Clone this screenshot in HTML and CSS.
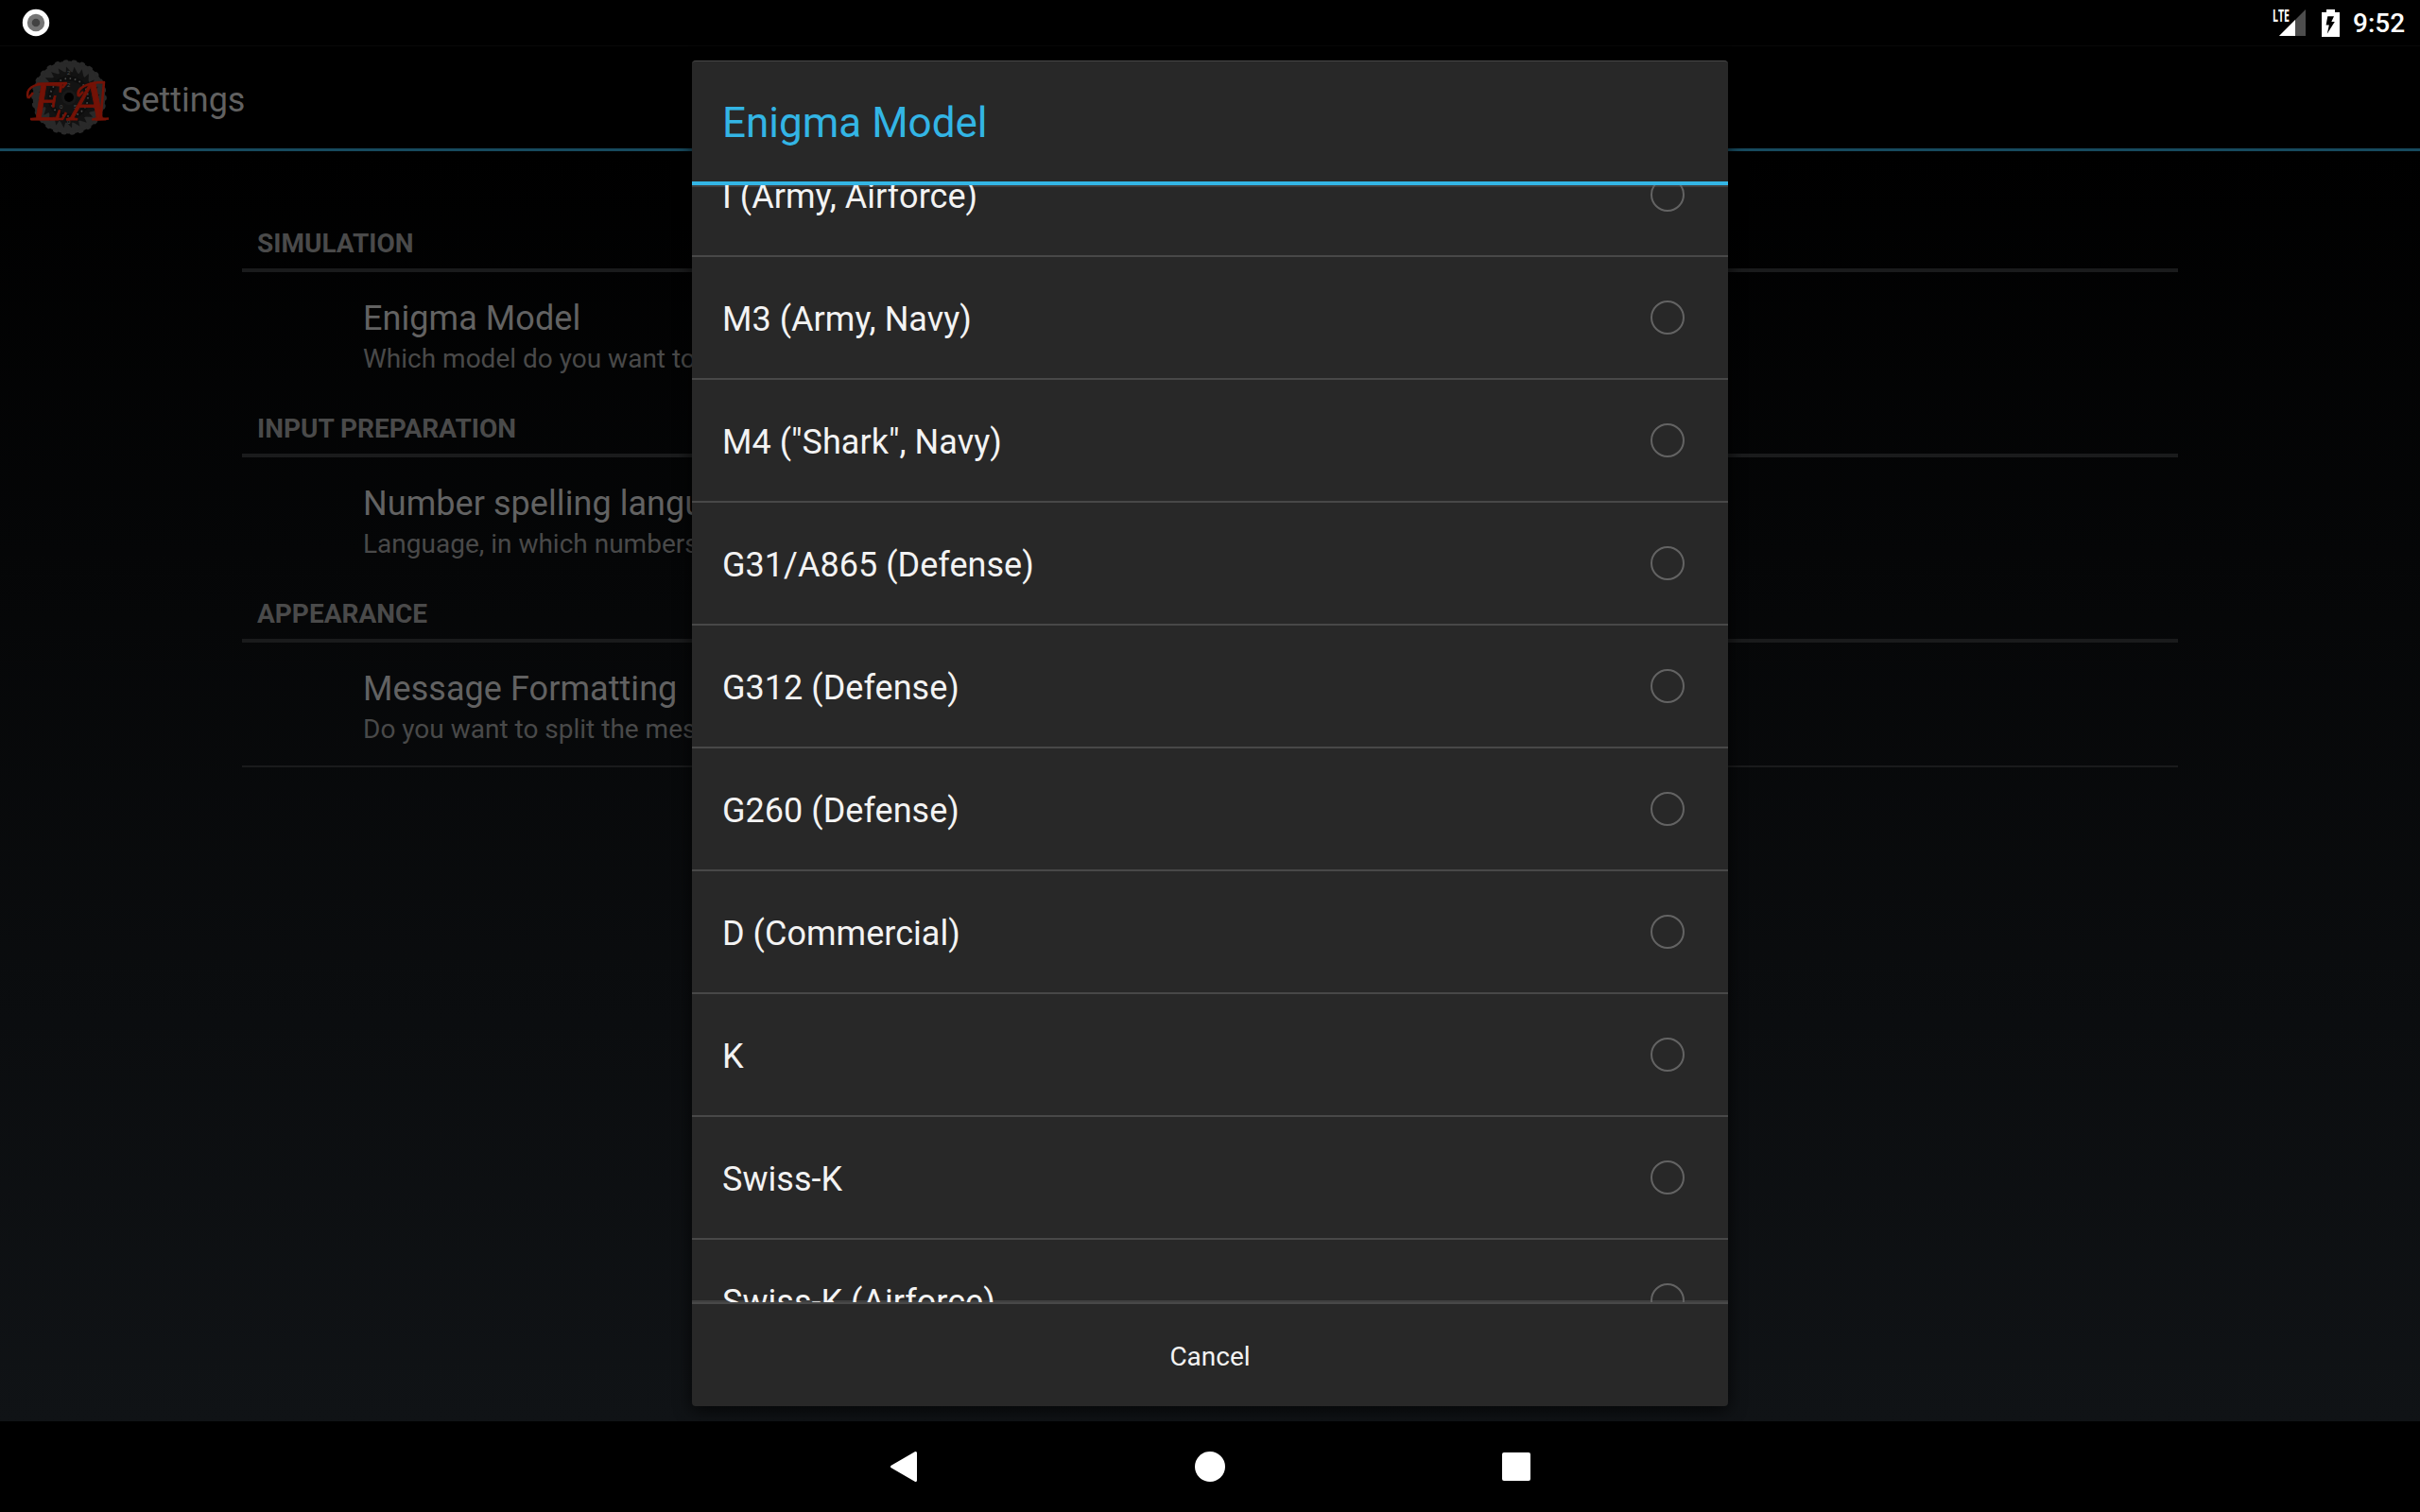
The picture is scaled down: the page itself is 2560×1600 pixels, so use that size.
FILE: index.html
```html
<!DOCTYPE html>
<html lang="en">
<head>
<meta charset="utf-8">
<title>Settings</title>
<link rel="stylesheet" href="styles.css">
</head>
<body>
<div class="screen">
  <header class="status">
    <svg class="status-dot" width="30" height="30" viewBox="0 0 30 30"><circle cx="15" cy="15" r="14.2" fill="#fff"/><circle cx="15" cy="15" r="9.2" fill="#757575"/><circle cx="15" cy="15" r="4.3" fill="#424242"/></svg>
    <div class="status-right">
      <svg class="signal" width="38" height="30" viewBox="0 0 38 30"><path d="M35 1V29H7Z" fill="#4d4d4d"/><path d="M24 12V29H7Z" fill="#fff"/><text class="lte" x="0" y="13.500" textLength="18" lengthAdjust="spacingAndGlyphs">LTE</text></svg>
      <svg class="battery" width="19" height="29" viewBox="0 0 19 29"><path d="M5 0H14V3H19V29H0V3H5Z" fill="#fff"/><path d="M6.3 7.3H13L10.3 13H13.8L5.8 25.8L7.8 16.5H4.6Z" fill="#000"/></svg>
      <span class="clock">9:52</span>
    </div>
  </header>
  <div class="actionbar">
    <svg class="logo" width="96" height="96" viewBox="0 0 96 96">
      <defs>
        <path id="tooth" d="M20.500 -3.500L32.500 -3L25 4Z"/>
        <g id="teeth"><use href="#tooth"/><use href="#tooth" transform="rotate(15)"/><use href="#tooth" transform="rotate(30)"/><use href="#tooth" transform="rotate(45)"/><use href="#tooth" transform="rotate(60)"/><use href="#tooth" transform="rotate(75)"/></g>
      </defs>
      <circle cx="48" cy="48" r="38.500" fill="#292929"/>
      <circle cx="48" cy="48" r="37.600" fill="none" stroke="#292929" stroke-width="4.500" stroke-linecap="round" stroke-dasharray="1.500 7.586"/>
      <circle cx="48" cy="48" r="27" fill="#121212"/>
      <g transform="translate(48 48)" fill="#121212"><use href="#teeth"/><use href="#teeth" transform="rotate(90)"/><use href="#teeth" transform="rotate(180)"/><use href="#teeth" transform="rotate(270)"/></g>
      <circle cx="48" cy="48" r="22.500" fill="#0d0d0d"/>
      <circle cx="48" cy="48" r="20" fill="none" stroke="#484848" stroke-width="1.700" stroke-dasharray="1.600 3.636"/>
      <circle cx="48" cy="48" r="17.500" fill="#131313"/>
      <circle cx="48" cy="48" r="8" fill="#181818"/>
      <circle cx="48" cy="48" r="5" fill="#000"/>
      <g class="rotor-mark"><text x="46" y="24">2</text><text x="46" y="37">2</text><text x="38" y="60">0</text><text x="53" y="60">5</text><text x="46" y="76">0</text></g>
      <g class="monogram"><text x="9" y="72" textLength="33" lengthAdjust="spacingAndGlyphs">E</text><text x="49" y="72" textLength="38" lengthAdjust="spacingAndGlyphs">A</text></g>
      <g class="swash">
        <path d="M5 49C1 39 11 33.500 24 33.500L45 33L41 38"/>
        <path d="M5 49L10 43"/>
        <path d="M7 71L41 71L45 64"/>
        <path d="M58 47C55 38 68 32 85 32L81.500 70"/>
        <path d="M58 47L63 42M45 71.500L52 70M76 71.500L90 70.500"/>
      </g>
    </svg>
    <h1 class="bar-title">Settings</h1>
  </div>
  <main class="prefs">
    <h2 class="section">SIMULATION</h2>
    <div class="pref"><div class="pref-title">Enigma Model</div><div class="pref-note">Which model do you want to</div></div>
    <h2 class="section">INPUT PREPARATION</h2>
    <div class="pref"><div class="pref-title">Number spelling langu</div><div class="pref-note">Language, in which numbers</div></div>
    <h2 class="section">APPEARANCE</h2>
    <div class="pref last"><div class="pref-title">Message Formatting</div><div class="pref-note">Do you want to split the mes</div></div>
  </main>
  <nav class="navbar">
    <svg width="32" height="34" viewBox="0 0 32 34"><path d="M28.500 2.500V31.500L3.500 17Z" fill="#fff" stroke="#fff" stroke-width="3" stroke-linejoin="round"/></svg>
    <svg width="32" height="32" viewBox="0 0 32 32"><circle cx="16" cy="16" r="16" fill="#fff"/></svg>
    <svg width="32" height="32" viewBox="0 0 32 32"><rect x="1" y="1" width="30" height="30" rx="2" fill="#fff"/></svg>
  </nav>
  <section class="dialog">
    <h2 class="dialog-title">Enigma Model</h2>
    <div class="list">
      <ul class="options">
        <li><span>I (Army, Airforce)</span><i class="radio"></i></li>
        <li><span>M3 (Army, Navy)</span><i class="radio"></i></li>
        <li><span>M4 ("Shark", Navy)</span><i class="radio"></i></li>
        <li><span>G31/A865 (Defense)</span><i class="radio"></i></li>
        <li><span>G312 (Defense)</span><i class="radio"></i></li>
        <li><span>G260 (Defense)</span><i class="radio"></i></li>
        <li><span>D (Commercial)</span><i class="radio"></i></li>
        <li><span>K</span><i class="radio"></i></li>
        <li><span>Swiss-K</span><i class="radio"></i></li>
        <li><span>Swiss-K (Airforce)</span><i class="radio"></i></li>
      </ul>
    </div>
    <button class="cancel">Cancel</button>
  </section>
</div>
</body>
</html>
```
FILE: styles.css
```css
* { box-sizing: border-box; }
body { margin: 0; background: #000; font-family: Roboto, sans-serif; font-weight: 400; }
h1, h2, ul { margin: 0; padding: 0; font-weight: 400; }
.screen {
  position: relative;
  display: flex;
  flex-direction: column;
  width: 2560px;
  height: 1600px;
  overflow: hidden;
  background: linear-gradient(#000 0, #000 160px, #101316 1504px);
}
.status {
  display: flex;
  align-items: center;
  justify-content: space-between;
  height: 48px;
  padding: 0 15px 0 23px;
  background: #000;
}
.status-right { display: flex; align-items: center; }
.signal { margin-right: 14px; overflow: visible; }
.battery { margin-right: 14px; }
.lte { font: 700 17px "Open Sans", sans-serif; fill: #fff; }
.clock { width: 56px; font-size: 28px; font-weight: 500; line-height: 48px; color: #fff; padding-top: 2px; white-space: nowrap; }
.actionbar {
  display: flex;
  align-items: center;
  height: 112px;
  padding-left: 25px;
  border-top: 1px solid #080808;
  border-bottom: 3px solid #174a5e;
}
.logo { flex: none; }
.rotor-mark { font: 6px "Liberation Sans", sans-serif; fill: #4a4a4a; }
.monogram { font: italic 400 60px "Liberation Serif", serif; fill: #741206; stroke: #741206; stroke-width: .8px; }
.swash { fill: none; stroke: #741206; stroke-width: 2.6px; stroke-linejoin: round; }
.bar-title { margin-left: 7px; padding-top: 5px; font-size: 36px; line-height: 42px; color: #616161; }
.prefs { flex: 1; padding: 62px 256px 0; }
.section {
  height: 66px;
  padding: 19px 16px 0;
  border-bottom: 4px solid #1a1b1c;
  font-size: 28px;
  font-weight: 700;
  line-height: 34px;
  color: #4a4a4a;
}
.pref { height: 130px; padding: 28px 0 0 128px; white-space: nowrap; }
.pref.last { height: 132px; border-bottom: 2px solid #1a1b1c; }
.pref-title { font-size: 36px; line-height: 42px; letter-spacing: .06px; color: #626262; }
.pref-note { margin-top: 5px; font-size: 28px; line-height: 34px; color: #494949; }
.navbar {
  display: flex;
  align-items: center;
  justify-content: center;
  gap: 292px;
  height: 96px;
  background: #000;
}
.dialog {
  position: absolute;
  left: 732px;
  top: 64px;
  display: flex;
  flex-direction: column;
  width: 1096px;
  height: 1424px;
  border-top: 1px solid #484848;
  border-radius: 4px;
  background: #282828;
  box-shadow: 0 4px 18px rgba(0, 0, 0, .75);
  overflow: hidden;
}
.dialog-title {
  height: 131px;
  padding: 39px 32px 0;
  border-bottom: 4px solid #33b5e5;
  font-size: 44px;
  line-height: 52px;
  color: #33b5e5;
}
.list {
  height: 1182px;
  overflow: hidden;
  border: 0;
  background: linear-gradient(#404040, #404040) 0 0 / 100% 2px no-repeat,
    linear-gradient(#404040, #404040) 0 100% / 100% 2px no-repeat;
}
.options { margin-top: -54px; list-style: none; }
.options li {
  display: flex;
  align-items: center;
  justify-content: space-between;
  height: 130px;
  padding: 0 46px 0 32px;
  border-bottom: 2px solid #484848;
  font-size: 36px;
  line-height: 42px;
  letter-spacing: .03px;
  color: #f3f3f3;
}
.options span { padding-top: 3px; }
.radio { width: 36px; height: 36px; border: 2px solid #636363; border-radius: 50%; }
.cancel {
  flex: 1;
  padding: 3px 0 0;
  border: 0;
  border-top: 2px solid #484848;
  background: transparent;
  font: 400 28px/34px Roboto, sans-serif;
  color: #f3f3f3;
}
```
